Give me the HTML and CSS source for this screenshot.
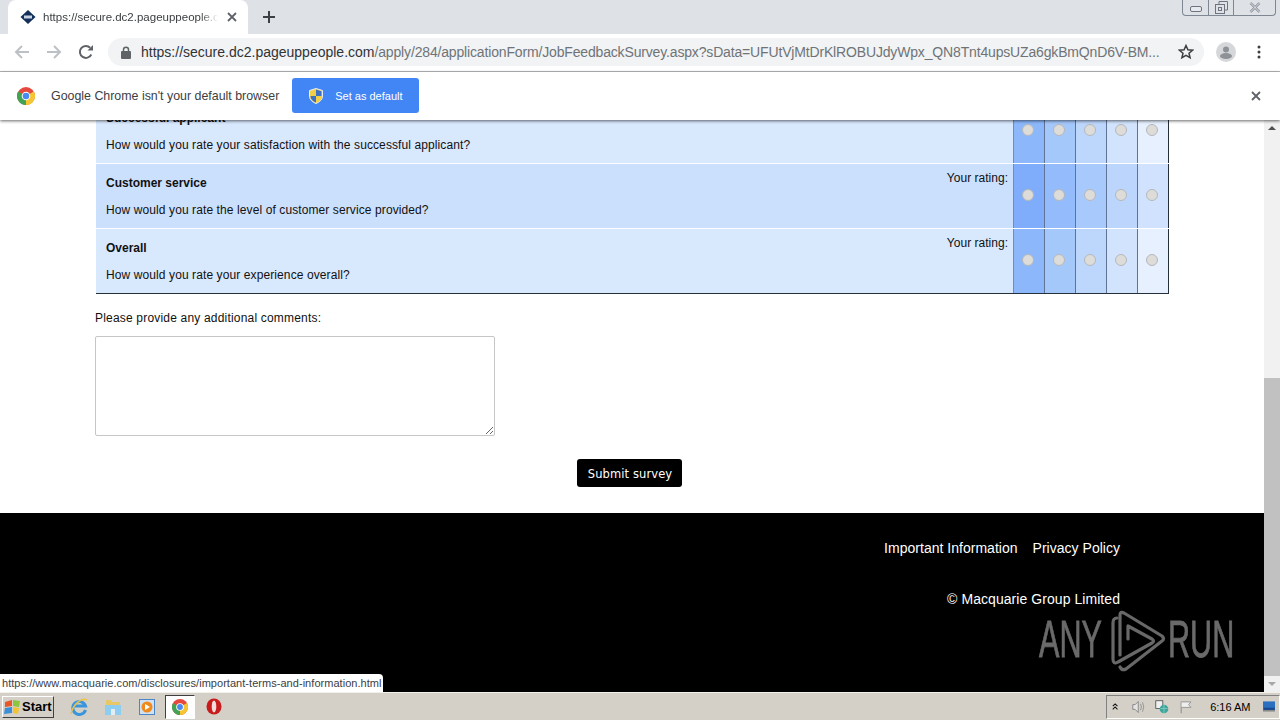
FILE: index.html
```html
<!DOCTYPE html>
<html lang="en">
<head>
<meta charset="utf-8">
<title>Job Feedback Survey</title>
<link rel="stylesheet" href="styles.css">
</head>
<body>
<div class="screen">
  <div class="tabstrip">
    <div class="tab">
      <svg class="favicon" width="16" height="16" viewBox="0 0 16 16"><path d="M8 1l7.500 7L8 15 .5 8z" fill="#14305a"/><rect x="4" y="6.500" width="8" height="3" fill="#c8d4e4"/></svg>
      <span class="tabtitle">https://secure.dc2.pageuppeople.com</span>
      <svg class="tabclose" width="10" height="10" viewBox="0 0 10 10"><path d="M1 1l8 8M9 1L1 9" stroke="#5f6368" stroke-width="1.800"/></svg>
    </div>
    <svg class="newtab" width="12" height="12" viewBox="0 0 12 12"><path d="M6 0v12M0 6h12" stroke="#3c4043" stroke-width="2"/></svg>
    <div class="winctl">
      <span class="winbtn"><svg width="12" height="6" viewBox="0 0 12 6"><rect x=".5" y=".5" width="11" height="5" rx="1.500" fill="#e6e9ee" stroke="#6d7480"/></svg></span>
      <span class="winbtn"><svg width="13" height="13" viewBox="0 0 13 13"><path d="M4 3V.5h8.500V9H10" fill="none" stroke="#6d7480"/><rect x=".5" y="3.500" width="9" height="9" fill="none" stroke="#6d7480"/><rect x="3.500" y="6.500" width="3" height="3" fill="none" stroke="#6d7480"/></svg></span>
      <span class="winbtn winclose"><svg width="12" height="11" viewBox="0 0 12 11"><path d="M1.500 1l9 9M10.500 1l-9 9" stroke="#7b828e" stroke-width="2.400"/><path d="M1.500 1l9 9M10.500 1l-9 9" stroke="#eef0f3" stroke-width="1"/></svg></span>
    </div>
  </div>
  <div class="toolbar">
    <svg class="navicon" width="16" height="16" viewBox="0 0 16 16"><path d="M15 8H2M8 2L2 8l6 6" fill="none" stroke="#bdc1c6" stroke-width="2"/></svg>
    <svg class="navicon" width="16" height="16" viewBox="0 0 16 16"><path d="M1 8h13M8 2l6 6-6 6" fill="none" stroke="#bdc1c6" stroke-width="2"/></svg>
    <svg class="navicon" width="16" height="16" viewBox="0 0 16 16"><path d="M13.300 10.500A6 6 0 1 1 12.200 3.700" fill="none" stroke="#5f6368" stroke-width="2"/><path d="M9.500 6.500H15V1z" fill="#5f6368"/></svg>
    <div class="omnibox">
      <svg class="lock" width="10" height="13" viewBox="0 0 10 13"><path d="M2.500 6V3.800a2.500 2.500 0 0 1 5 0V6" fill="none" stroke="#5f6368" stroke-width="1.500"/><rect y="5" width="10" height="8" rx="1" fill="#5f6368"/></svg>
      <span class="url"><span class="urlhost">https://secure.dc2.pageuppeople.com</span><span class="urlrest">/apply/284/applicationForm/JobFeedbackSurvey.aspx?sData=UFUtVjMtDrKlROBUJdyWpx_QN8Tnt4upsUZa6gkBmQnD6V-BM...</span></span>
      <svg class="star" width="16" height="16" viewBox="0 0 16 16"><path d="M8 1.500l1.900 4.300 4.600.4-3.500 3 1.100 4.500L8 11.300l-4.100 2.400L5 9.200l-3.500-3 4.600-.4z" fill="none" stroke="#3c4043" stroke-width="1.500"/></svg>
    </div>
    <svg class="avatar" width="20" height="20" viewBox="0 0 20 20"><circle cx="10" cy="10" r="10" fill="#d5d7da"/><circle cx="10" cy="7.500" r="3" fill="#8e9296"/><ellipse cx="10" cy="14" rx="6" ry="3" fill="#8e9296"/></svg>
    <svg class="menu" width="4" height="14" viewBox="0 0 4 14"><circle cx="2" cy="2" r="1.500" fill="#3c4043"/><circle cx="2" cy="7" r="1.500" fill="#3c4043"/><circle cx="2" cy="12" r="1.500" fill="#3c4043"/></svg>
  </div>
  <div class="infobar">
    <svg class="chromelogo" width="18" height="18" viewBox="0 0 18 18"><circle cx="9" cy="9" r="9" fill="#e5483c"/><path d="M9 9L1.200 4.500A9 9 0 0 0 9 18z" fill="#43a354"/><path d="M9 9l7.800-4.500A9 9 0 0 1 9 18z" fill="#f6c533"/><circle cx="9" cy="9" r="4.300" fill="#fff"/><circle cx="9" cy="9" r="3.300" fill="#4a8af0"/></svg>
    <span class="infotext">Google Chrome isn't your default browser</span>
    <button class="defaultbtn" type="button">
      <svg width="14" height="16" viewBox="0 0 14 16"><path d="M7 .5l6.500 2V8c0 3.700-2.800 6-6.500 7.500C3.300 14 .5 11.700.5 8V2.500z" fill="#f3cf48" stroke="#e8edf5"/><path d="M7 1.500l5.500 1.700V8H7zM7 8v6.500C4 13.200 1.500 11.200 1.500 8z" fill="#3d6fc4"/></svg>
      <span>Set as default</span>
    </button>
    <svg class="infoclose" width="10" height="10" viewBox="0 0 10 10"><path d="M1 1l8 8M9 1L1 9" stroke="#5f6368" stroke-width="1.800"/></svg>
  </div>
  <div class="viewport">
    <div class="page">
      <div class="content">
        <div class="survey">
          <div class="row row-light">
            <div class="qtext"><div class="qhead"><b>Successful applicant</b></div><p>How would you rate your satisfaction with the successful applicant?</p></div>
            <div class="rating">Your rating:</div>
            <div class="opt a1"><i class="radio"></i></div><div class="opt a2"><i class="radio"></i></div><div class="opt a3"><i class="radio"></i></div><div class="opt a4"><i class="radio"></i></div><div class="opt a5"><i class="radio"></i></div>
          </div>
          <div class="row row-dark">
            <div class="qtext"><div class="qhead"><b>Customer service</b></div><p>How would you rate the level of customer service provided?</p></div>
            <div class="rating">Your rating:</div>
            <div class="opt b1"><i class="radio"></i></div><div class="opt b2"><i class="radio"></i></div><div class="opt b3"><i class="radio"></i></div><div class="opt b4"><i class="radio"></i></div><div class="opt b5"><i class="radio"></i></div>
          </div>
          <div class="row row-light">
            <div class="qtext"><div class="qhead"><b>Overall</b></div><p>How would you rate your experience overall?</p></div>
            <div class="rating">Your rating:</div>
            <div class="opt a1"><i class="radio"></i></div><div class="opt a2"><i class="radio"></i></div><div class="opt a3"><i class="radio"></i></div><div class="opt a4"><i class="radio"></i></div><div class="opt a5"><i class="radio"></i></div>
          </div>
        </div>
        <label class="commentlabel" for="comments">Please provide any additional comments:</label>
        <textarea id="comments" class="comments"></textarea>
        <div class="submitrow"><button class="submit" type="button">Submit survey</button></div>
      </div>
      <div class="footer">
        <div class="footlinks"><a>Important Information</a><a>Privacy Policy</a></div>
        <div class="copyright">© Macquarie Group Limited</div>
      </div>
      <div class="watermark">
        <span class="wmword">ANY</span>
        <svg class="wmlogo" width="70" height="70" viewBox="0 0 70 70"><path d="M17 13Q13 13 13 18V54Q13 60 18 57L52 38Q55 36 52 34L28 21V34" fill="none" stroke="#686868" stroke-width="3.200" stroke-linecap="round" stroke-linejoin="round"/><path d="M20 50V10Q20 6 24 8L62 31Q65 34 62 36L26 64Q22 66 20 62" fill="none" stroke="#686868" stroke-width="3.200" stroke-linecap="round" stroke-linejoin="round"/></svg>
        <span class="wmword wmrun">RUN</span>
      </div>
      <div class="statusbubble">https://www.macquarie.com/disclosures/important-terms-and-information.html</div>
    </div>
    <div class="scrollbar">
      <svg class="arrow" width="16" height="16" viewBox="0 0 16 16"><path d="M4 10l4-4 4 4z" fill="#505050"/></svg>
      <div class="track"><div class="thumb"></div></div>
      <svg class="arrow" width="16" height="16" viewBox="0 0 16 16"><path d="M4 6l4 4 4-4z" fill="#a8a8a8"/></svg>
    </div>
  </div>
  <div class="taskbar">
    <button class="start" type="button">
      <svg width="17" height="16" viewBox="0 0 17 16"><path d="M1 3l7-2v6l-7 1z" fill="#e8562a"/><path d="M9 1l7 1-1 6-6-1z" fill="#8cc63f"/><path d="M1 9l7-1v6l-8 1z" fill="#3b8fd8"/><path d="M9 8l6 1-1 6-5-1z" fill="#f5c330"/></svg>
      <span>Start</span>
    </button>
    <div class="apps">
      <span class="app"><svg width="18" height="18" viewBox="0 0 18 18"><path d="M15.500 12A6.500 6.500 0 1 1 15.500 8H4.500" fill="none" stroke="#3a95dc" stroke-width="3"/><path d="M1 16C3 6 12-1 17 2" fill="none" stroke="#e9c34a" stroke-width="1.500"/></svg></span>
      <span class="app"><svg width="18" height="18" viewBox="0 0 18 18"><path d="M2 2h5l1 2h8v13H2z" fill="#e8c766"/><path d="M1 7h16v10H1z" fill="#8fcdf0"/><rect x="7" y="11" width="4" height="6" fill="#e4edf4"/></svg></span>
      <span class="app"><svg width="16" height="16" viewBox="0 0 16 16"><rect x=".5" y=".5" width="15" height="15" fill="#cfe1f2" stroke="#4d86c6"/><circle cx="8" cy="8" r="5.500" fill="#f08a1d"/><path d="M6 5l5 3-5 3z" fill="#fff"/></svg></span>
      <span class="app app-active"><svg width="16" height="16" viewBox="0 0 18 18"><circle cx="9" cy="9" r="9" fill="#e5483c"/><path d="M9 9L1.200 4.500A9 9 0 0 0 9 18z" fill="#43a354"/><path d="M9 9l7.800-4.500A9 9 0 0 1 9 18z" fill="#f6c533"/><circle cx="9" cy="9" r="4.300" fill="#fff"/><circle cx="9" cy="9" r="3.300" fill="#4a8af0"/></svg></span>
      <span class="app"><svg width="16" height="17" viewBox="0 0 16 17"><ellipse cx="8" cy="8.500" rx="7.500" ry="8" fill="#c81c1c"/><ellipse cx="8" cy="8.500" rx="2.300" ry="6" fill="#f4dcdc"/></svg></span>
    </div>
    <div class="tray">
      <svg width="8" height="10" viewBox="0 0 8 10"><path d="M1 4l3-3 3 3M1 8l3-3 3 3" fill="none" stroke="#111" stroke-width="1.300"/></svg>
      <svg class="tray-speaker" width="17" height="16" viewBox="0 0 17 16"><path d="M1 5h3l4-4v14l-4-4H1z" fill="#e4e4e4" stroke="#777"/><path d="M11 4q2 4 0 8M13.500 2q3 6 0 12" fill="none" stroke="#888"/></svg>
      <svg class="tray-net" width="18" height="18" viewBox="0 0 18 18"><rect x="1" y="1" width="9" height="10" fill="#f0f0f0" stroke="#444"/><circle cx="11.500" cy="11.500" r="5.500" fill="#3fa59b"/><path d="M7 11h9M11.500 6v11" stroke="#86cfc6"/></svg>
      <svg class="tray-flag" width="16" height="16" viewBox="0 0 16 16"><path d="M1.500 1v15" stroke="#777"/><path d="M2 1.500h12l-3 3.500 3 3.500H2" fill="#eee" stroke="#888"/></svg>
      <span class="clock">6:16 AM</span>
      <svg class="desktop" width="16" height="13" viewBox="0 0 16 13"><rect width="16" height="11" fill="#2a6fc0"/><rect y="11" width="16" height="2" fill="#8a8a8a"/><path d="M1 8h14v3H1z" fill="#1a4b8e"/></svg>
    </div>
  </div>
</div>
</body>
</html>
```
FILE: styles.css
```css
* { box-sizing: border-box; }
html, body { margin: 0; padding: 0; width: 1280px; height: 720px; overflow: hidden; }
body { font-family: "Liberation Sans", Arial, sans-serif; font-size: 12px; color: #000; }
.screen { display: flex; flex-direction: column; width: 1280px; height: 720px; background: #fff; }

.tabstrip { position: relative; display: flex; align-items: center; height: 34px; padding-left: 8px; background: #dee1e6; flex: none; }
.tab { display: flex; align-items: center; width: 240px; height: 34px; padding: 0 11px 0 12px; background: #fff; border-radius: 8px 8px 0 0; }
.favicon { flex: none; }
.tabtitle { flex: 1; margin-left: 7px; width: 172px; overflow: hidden; white-space: nowrap; font-size: 11.500px; color: #3c4043;
  -webkit-mask-image: linear-gradient(90deg, #000 90%, transparent); mask-image: linear-gradient(90deg, #000 90%, transparent); }
.tabclose { flex: none; margin-left: 9px; }
.newtab { margin-left: 15px; }
.winctl { position: absolute; top: 0; right: 4px; display: flex; height: 16px; border: 1px solid #7f8792; border-top: 0; border-radius: 0 0 4px 4px; }
.winbtn { display: flex; align-items: center; justify-content: center; width: 25px; border-left: 1px solid #7f8792; }
.winbtn:first-child { border-left: 0; width: 25px; padding-top: 3px; }
.winclose { width: 42px; }

.toolbar { display: flex; align-items: center; height: 38px; padding: 0 0 1px 14px; background: #fff; border-bottom: 1px solid #b8babd; flex: none; }
.navicon { flex: none; margin-right: 16px; }
.omnibox { display: flex; align-items: center; width: 1096px; height: 28px; margin-left: -2px; padding: 0 10px 0 13px; background: #f1f3f4; border-radius: 14px; }
.lock { flex: none; }
.url { flex: 1; margin-left: 10px; white-space: nowrap; overflow: hidden; font-size: 14px; color: #6f7378; }
.urlhost { color: #303236; }
.urlrest { letter-spacing: -.16px; }
.star { flex: none; margin-left: 8px; }
.avatar { flex: none; margin-left: 12px; }
.menu { flex: none; margin-left: 21px; }

.infobar { position: relative; z-index: 2; display: flex; align-items: center; height: 48px; padding: 0 0 1px 17px; background: #fff; box-shadow: 0 1px 3px rgba(0,0,0,.6); flex: none; }
.chromelogo { flex: none; }
.infotext { margin-left: 16px; font-size: 12.400px; color: #3c4043; }
.defaultbtn { display: flex; align-items: center; width: 127px; height: 35px; margin-left: 13px; padding: 0 0 0 17px; border: 0; border-radius: 3px; background: #4285f4; color: #fff; font: 11px "Liberation Sans", Arial, sans-serif; }
.defaultbtn span { margin-left: 12px; }
.infoclose { position: absolute; right: 19px; top: 19px; }

.viewport { display: flex; height: 572px; flex: none; }
.page { position: relative; display: flex; flex-direction: column; width: 1264px; overflow: hidden; background: #fff; }
.content { flex: 1; padding: 0 0 0 95px; }
.survey { width: 1073px; margin: -21px 0 0 1px; border-bottom: 1px solid #26303a; }
.row { display: flex; height: 65px; border-bottom: 1px solid #fff; }
.row:last-child { border-bottom: 0; height: 64px; }
.row-light { background: #d8e8fd; }
.row-dark { background: #cbe0fd; }
.qtext { flex: 1; padding-left: 10px; font-size: 12px; letter-spacing: .1px; color: #111; }
.qhead { margin-top: 12px; line-height: 14px; font-size: 12px; letter-spacing: 0; }
.qtext p { margin: 13px 0 0; line-height: 14px; }
.rating { padding: 7px 5px 0 0; line-height: 14px; letter-spacing: .02px; color: #111; }
.opt { display: flex; align-items: center; justify-content: center; width: 31px; padding: 0 2px 2px 0; border-left: 1px solid #5e7396; }
.opt:last-child { border-right: 1px solid #26303a; width: 32px; padding-right: 2px; }
.opt.a1, .opt.b1 { border-left-color: #6f8cc0; }
.a1 { background: #8cb8fb; } .a2 { background: #a5c8fb; } .a3 { background: #bdd6fc; } .a4 { background: #d2e4fd; } .a5 { background: #e6f0fe; }
.b1 { background: #7fadfb; } .b2 { background: #94bbfb; } .b3 { background: #a8c9fc; } .b4 { background: #bcd5fc; } .b5 { background: #d0e2fd; }
.radio { display: block; width: 12px; height: 12px; border: 1px solid #b4b8bc; border-radius: 50%; background: #dedcd8; }

.commentlabel { display: block; margin-top: 17px; line-height: 14px; letter-spacing: .19px; color: #111; }
.comments { display: block; width: 400px; height: 100px; margin: 11px 0 0; border: 1px solid #c6c6c6; border-radius: 2px; background: #fff; outline: 0; }
.submitrow { width: 1069px; margin-top: 23px; text-align: center; }
.submit { width: 105px; height: 28px; padding: 1px 0 0 1px; border: 0; border-radius: 3px; background: #000; color: #fff; font: 11.500px "DejaVu Sans", sans-serif; letter-spacing: .1px; }

.footer { height: 179px; padding: 27px 144px 0 0; background: #000; color: #fff; text-align: right; font-size: 14px; letter-spacing: .02px; flex: none; }
.footlinks { display: flex; justify-content: flex-end; gap: 15px; line-height: 16px; }
.copyright { margin-top: 35px; line-height: 16px; letter-spacing: .06px; }
.watermark { position: absolute; left: 1039px; top: 485px; display: flex; align-items: center; height: 70px; color: #6a6a6a; font: 51px/70px "Liberation Sans", sans-serif; }
.wmword { display: block; width: 61px; transform: scaleX(.6); transform-origin: left center; white-space: nowrap; -webkit-text-stroke: .8px #6a6a6a; }
.wmlogo { flex: none; }
.wmrun { margin-left: -2px; }
.statusbubble { position: absolute; left: 0; bottom: 0; width: 383px; height: 18px; padding-left: 2px; background: #fff; border-radius: 0 4px 0 0; font-size: 11px; line-height: 18px; letter-spacing: .04px; color: #3c4043; white-space: nowrap; overflow: hidden; }

.scrollbar { display: flex; flex-direction: column; width: 16px; background: #f1f1f1; }
.arrow { flex: none; }
.track { flex: 1; display: flex; flex-direction: column; justify-content: flex-end; }
.thumb { height: 298px; background: #c1c1c1; }

.taskbar { display: flex; align-items: center; height: 28px; padding-left: 2px; background: #d4d0c8; border-top: 1px solid #f2f0eb; flex: none; }
.start { display: flex; align-items: center; gap: 1px; width: 52px; height: 22px; padding: 0 0 0 1px; background: #d4d0c8; border: 1px solid; border-color: #fff #404040 #404040 #fff; font: bold 13px "Liberation Sans", Arial, sans-serif; color: #000; }
.apps { display: flex; align-items: center; margin-left: 8px; }
.app { display: flex; align-items: center; justify-content: center; width: 34px; height: 24px; }
.app-active { width: 30px; margin: 0 2px 0 1px; background: #fff; border: 1px solid; border-color: #404040 #fff #fff #404040; }
.tray { display: flex; align-items: center; gap: 12px; height: 24px; margin-left: auto; padding: 0 4px 0 5px; width: 174px; border: 1px solid; border-color: #808080 #fff #fff #808080; }
.tray-speaker { margin-left: 2px; }
.tray-net { margin-left: -3px; }
.tray-flag { margin-left: -1px; }
.clock { margin-left: 6px; font-size: 11px; white-space: nowrap; }
.desktop { margin-left: auto; }
```
